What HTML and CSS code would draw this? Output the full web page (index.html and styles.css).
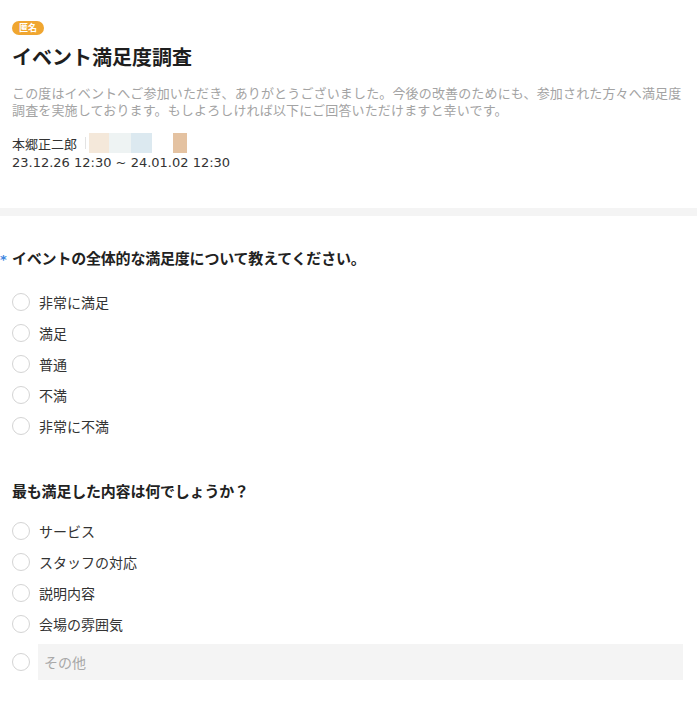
FILE: index.html
```html
<!DOCTYPE html>
<html lang="ja">
<head>
<meta charset="utf-8">
<title>イベント満足度調査</title>
<link rel="stylesheet" href="styles.css">
</head>
<body>
<header class="header">
  <span class="badge">匿名</span>
  <h1 class="title">イベント満足度調査</h1>
  <p class="desc">この度はイベントへご参加いただき、ありがとうございました。今後の改善のためにも、参加された方々へ満足度調査を実施しております。もしよろしければ以下にご回答いただけますと幸いです。</p>
  <div class="author">
    <span class="author-name">本郷正二郎</span>
    <span class="sep"></span>
    <span class="sw sw1"></span><span class="sw sw2"></span><span class="sw sw3"></span><span class="sw sw4"></span><span class="sw sw5"></span>
  </div>
  <div class="date">23.12.26 12:30 ~ 24.01.02 12:30</div>
</header>
<div class="band"></div>
<main class="survey">
  <section class="q q1">
    <h2 class="q-title"><span class="req">*</span>イベントの全体的な満足度について教えてください。</h2>
    <ul class="opts">
      <li class="opt"><span class="radio"></span><span>非常に満足</span></li>
      <li class="opt"><span class="radio"></span><span>満足</span></li>
      <li class="opt"><span class="radio"></span><span>普通</span></li>
      <li class="opt"><span class="radio"></span><span>不満</span></li>
      <li class="opt"><span class="radio"></span><span>非常に不満</span></li>
    </ul>
  </section>
  <section class="q q2">
    <h2 class="q-title">最も満足した内容は何でしょうか？</h2>
    <ul class="opts">
      <li class="opt"><span class="radio"></span><span>サービス</span></li>
      <li class="opt"><span class="radio"></span><span>スタッフの対応</span></li>
      <li class="opt"><span class="radio"></span><span>説明内容</span></li>
      <li class="opt"><span class="radio"></span><span>会場の雰囲気</span></li>
      <li class="opt opt-other"><span class="radio"></span><span class="other-box">その他</span></li>
    </ul>
  </section>
</main>
</body>
</html>
```

FILE: styles.css
```css
* { box-sizing: border-box; }
html, body { margin: 0; padding: 0; background: #fff; }
body {
  font-family: "DejaVu Sans", "Noto Sans CJK JP", sans-serif;
  color: #333;
  width: 697px;
}
.header {
  padding: 21px 12px 38px;
}
.badge {
  display: flex;
  align-items: center;
  justify-content: center;
  width: 32px;
  height: 14px;
  border-radius: 7px;
  background: #f0a630;
  color: #fff;
  font-family: "Noto Sans CJK JP", sans-serif;
  font-size: 9px;
  font-weight: 700;
  line-height: 14px;
}
.title {
  margin: 8px 0 0;
  font-family: "Noto Sans CJK JP", sans-serif;
  font-size: 20px;
  line-height: 28px;
  font-weight: 700;
  color: #1e1e1e;
}
.desc {
  margin: 13px 0 0;
  font-family: "Noto Sans CJK JP", sans-serif;
  font-size: 13px;
  line-height: 17px;
  letter-spacing: 0.15px;
  color: #a3a3a3;
}
.author {
  margin-top: 15px;
  height: 20px;
  display: flex;
  align-items: center;
  font-family: "Noto Sans CJK JP", sans-serif;
  font-size: 13px;
  color: #333;
}
.author-name { margin-right: 8px; }
.sep {
  width: 1px;
  height: 12px;
  background: #e3e3e3;
  margin-right: 3px;
}
.sw { height: 20px; display: block; }
.sw1 { width: 20px; background: #f4e8da; }
.sw2 { width: 22px; background: #eef3f3; }
.sw3 { width: 21px; background: #dce9f0; }
.sw4 { width: 21px; background: #fff; }
.sw5 { width: 14px; background: #e4c2a1; }
.date {
  margin-top: 3px;
  font-size: 13px;
  line-height: 14px;
  color: #333;
}
.band {
  height: 8px;
  background: #f4f4f4;
}
.survey {
  padding: 31px 12px 0;
}
.q-title {
  margin: 0;
  font-family: "Noto Sans CJK JP", sans-serif;
  font-size: 15px;
  line-height: 22px;
  font-weight: 700;
  color: #222;
  letter-spacing: -0.2px;
}
.q1 .q-title { margin-left: -12px; }
.req {
  display: inline-block;
  width: 12px;
  color: #3d86e0;
  font-family: "DejaVu Sans", sans-serif;
  font-size: 13px;
  font-weight: 700;
  vertical-align: 0;
}
.opts {
  list-style: none;
  margin: 15px 0 0;
  padding: 0;
}
.q2 { margin-top: 39px; }
.q2 .opts { margin-top: 13px; }
.opt {
  height: 31px;
  display: flex;
  align-items: center;
  gap: 9px;
  font-family: "Noto Sans CJK JP", sans-serif;
  font-size: 14px;
  color: #333;
}
.radio {
  flex: none;
  width: 18px;
  height: 18px;
  border: 1px solid #d4d4d4;
  border-radius: 50%;
  background: #fff;
}
.opt-other {
  height: 36px;
  margin-top: 5px;
  gap: 8px;
}
.other-box {
  flex: 1;
  height: 36px;
  margin-right: 2px;
  display: flex;
  align-items: center;
  padding-left: 6px;
  background: #f4f4f4;
  color: #a8a8a8;
}
```
